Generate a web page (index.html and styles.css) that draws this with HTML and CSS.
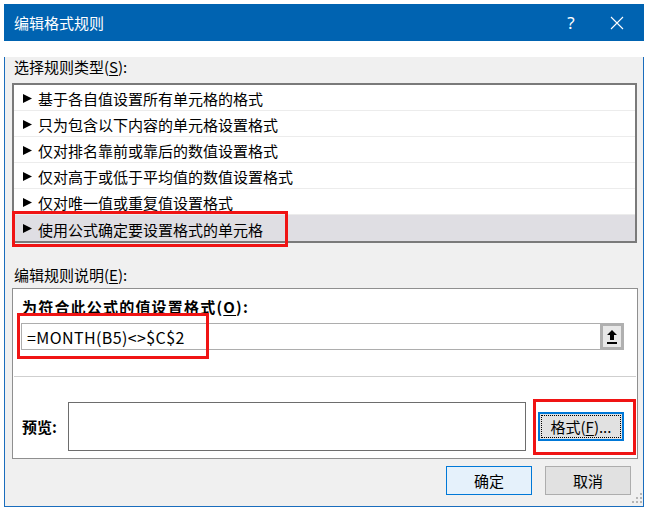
FILE: index.html
```html
<!DOCTYPE html>
<html>
<head>
<meta charset="utf-8">
<link rel="stylesheet" href="styles.css">
</head>
<body>
<div class="window">
  <div class="titlebar">
    <span class="title">编辑格式规则</span>
    <span class="tb-btn help">?</span>
    <span class="tb-btn close">
      <svg width="14" height="14" viewBox="0 0 14 14"><path d="M1 1 L13 13 M13 1 L1 13" stroke="#fff" stroke-width="1.1" fill="none"/></svg>
    </span>
  </div>
  <div class="body">
    <div class="label top-label">选择规则类型(<u>S</u>):</div>
    <div class="listbox">
      <div class="row"><svg class="arrow" width="9" height="9" viewBox="0 0 9 9"><polygon points="0,0 9,4.5 0,9" fill="#000"/></svg><span>基于各自值设置所有单元格的格式</span></div>
      <div class="row"><svg class="arrow" width="9" height="9" viewBox="0 0 9 9"><polygon points="0,0 9,4.5 0,9" fill="#000"/></svg><span>只为包含以下内容的单元格设置格式</span></div>
      <div class="row"><svg class="arrow" width="9" height="9" viewBox="0 0 9 9"><polygon points="0,0 9,4.5 0,9" fill="#000"/></svg><span>仅对排名靠前或靠后的数值设置格式</span></div>
      <div class="row"><svg class="arrow" width="9" height="9" viewBox="0 0 9 9"><polygon points="0,0 9,4.5 0,9" fill="#000"/></svg><span>仅对高于或低于平均值的数值设置格式</span></div>
      <div class="row"><svg class="arrow" width="9" height="9" viewBox="0 0 9 9"><polygon points="0,0 9,4.5 0,9" fill="#000"/></svg><span>仅对唯一值或重复值设置格式</span></div>
      <div class="row selected"><svg class="arrow" width="9" height="9" viewBox="0 0 9 9"><polygon points="0,0 9,4.5 0,9" fill="#000"/></svg><span>使用公式确定要设置格式的单元格</span></div>
    </div>
    <div class="label desc-label">编辑规则说明(<u>E</u>):</div>
    <div class="group">
      <div class="bold-label wide">为符合此公式的值设置格式(<u>O</u>):</div>
      <div class="formula">
        <span class="formula-text">=MONTH(B5)&lt;&gt;$C$2</span>
        <span class="collapse-btn">
          <svg width="10" height="14" viewBox="0 0 10 14"><polygon points="5,0 10,5 7,5 7,10 3,10 3,5 0,5" fill="#000"/><rect x="0" y="12" width="10" height="2" fill="#000"/></svg>
        </span>
      </div>
      <div class="divider"></div>
      <div class="preview-row">
        <span class="bold-label preview-label">预览:</span>
        <div class="preview-box"></div>
        <button class="btn format-btn"><span class="focus">格式(<u>F</u>)...</span></button>
      </div>
    </div>
    <div class="footer">
      <button class="btn ok-btn">确定</button>
      <button class="btn cancel-btn">取消</button>
    </div>
  </div>
  <div class="mark mark1"></div>
  <div class="mark mark2"></div>
  <div class="mark mark3"></div>
  <svg class="grip" width="10" height="10" viewBox="0 0 10 10">
    <rect x="8" y="0" width="2" height="2" fill="#b5b5b5"/>
    <rect x="4" y="4" width="2" height="2" fill="#b5b5b5"/>
    <rect x="8" y="4" width="2" height="2" fill="#b5b5b5"/>
    <rect x="0" y="8" width="2" height="2" fill="#b5b5b5"/>
    <rect x="4" y="8" width="2" height="2" fill="#b5b5b5"/>
    <rect x="8" y="8" width="2" height="2" fill="#b5b5b5"/>
  </svg>
</div>
</body>
</html>
```

FILE: styles.css
```css
* { box-sizing: border-box; }
html, body { margin: 0; padding: 0; background: #fff; }
body {
  font-family: "Noto Sans CJK SC", "Noto Sans", sans-serif;
  font-size: 15px;
  color: #000;
}
u { text-decoration: underline; text-underline-offset: 2px; }

.window {
  position: relative;
  margin: 4px 0 0 4px;
  width: 640px;
}

.titlebar {
  height: 37px;
  background: #0063b1;
  color: #fff;
  display: flex;
  align-items: center;
  padding-left: 10px;
}
.title { flex: 1; font-size: 15px; line-height: 20px; }
.tb-btn {
  width: 46px;
  height: 37px;
  display: flex;
  align-items: center;
  justify-content: center;
  font-size: 17px;
  font-family: "Noto Sans", sans-serif;
}
.close { width: 50px; padding-right: 4px; }

.body {
  background: #f0f0f0;
  border: 1px solid #1a6dbd;
  border-top: none;
  padding: 0 6px 11px 7px;
}

.label { height: 20px; line-height: 20px; padding-left: 2px; }
.top-label { margin-top: 16px; }
.desc-label { margin-top: 22px; }

.listbox {
  margin-top: 6px;
  height: 160px;
  border: 2px solid #7a7a7a;
  background: #fff;
}
.row {
  height: 26px;
  border-bottom: 1px solid #ececec;
  display: flex;
  align-items: center;
  padding: 2px 0 0 9px;
  gap: 6px;
  line-height: 23px;
}
.row.selected { background: #dfdee3; border-bottom: none; }
.arrow { flex: none; margin-top: -1px; }

.group {
  margin-top: 3px;
  height: 171px;
  border: 1px solid #8f8f8f;
  background: #fff;
  padding: 8px 0 6px 0;
  margin-right: -1px;
}
.bold-label {
  font-weight: bold;
  height: 20px;
  line-height: 20px;
  padding-left: 9px;
}
.wide { letter-spacing: 1.2px; }
.formula {
  margin: 6px 13px 0 8px;
  height: 27px;
  border: 1px solid #adadad;
  display: flex;
  align-items: center;
}
.formula-text {
  flex: 1;
  padding-left: 5px;
  font-size: 16px;
  letter-spacing: 0.4px;
  line-height: 25px;
  padding-top: 2px;
}
.collapse-btn {
  width: 24px;
  height: 27px;
  margin: -1px -1px -1px 0;
  border: 3px solid #b0b0b0;
  background: #e8e8e8;
  display: flex;
  align-items: center;
  justify-content: center;
}
.divider {
  margin: 26px 1px 0 1px;
  height: 1px;
  background: #cfcfcf;
}
.preview-row {
  margin-top: 25px;
  height: 49px;
  display: flex;
  align-items: center;
  padding-right: 13px;
}
.preview-label { width: 55px; flex: none; }
.preview-box {
  width: 458px;
  height: 49px;
  border: 1px solid #6d6d6d;
  background: #fff;
}

.btn {
  font-family: "Noto Sans CJK SC", "Noto Sans", sans-serif;
  font-size: 15px;
  color: #000;
  width: 86px;
  height: 29px;
  padding: 0;
  display: flex;
  align-items: center;
  justify-content: center;
  line-height: 20px;
}
.format-btn {
  margin-left: 12px;
  border: 2px solid #0078d7;
  background: #e1e1e1;
  padding: 1px;
}
.focus {
  width: 100%;
  height: 100%;
  border: 1px dotted #000;
  display: flex;
  align-items: center;
  justify-content: center;
}

.footer {
  margin-top: 7px;
  display: flex;
  justify-content: flex-end;
  gap: 13px;
  padding-right: 6px;
}
.ok-btn { background: #e5f1fb; border: 1px solid #0078d7; }
.cancel-btn { background: #e1e1e1; border: 1px solid #adadad; }

.mark {
  position: absolute;
  border: 3px solid #f01414;
}
.mark1 { left: 8px; top: 207px; width: 276px; height: 36px; }
.mark2 { left: 13px; top: 309px; width: 192px; height: 46px; }
.mark3 { left: 529px; top: 395px; width: 103px; height: 56px; }

.grip { position: absolute; left: 628px; top: 489px; }
```
